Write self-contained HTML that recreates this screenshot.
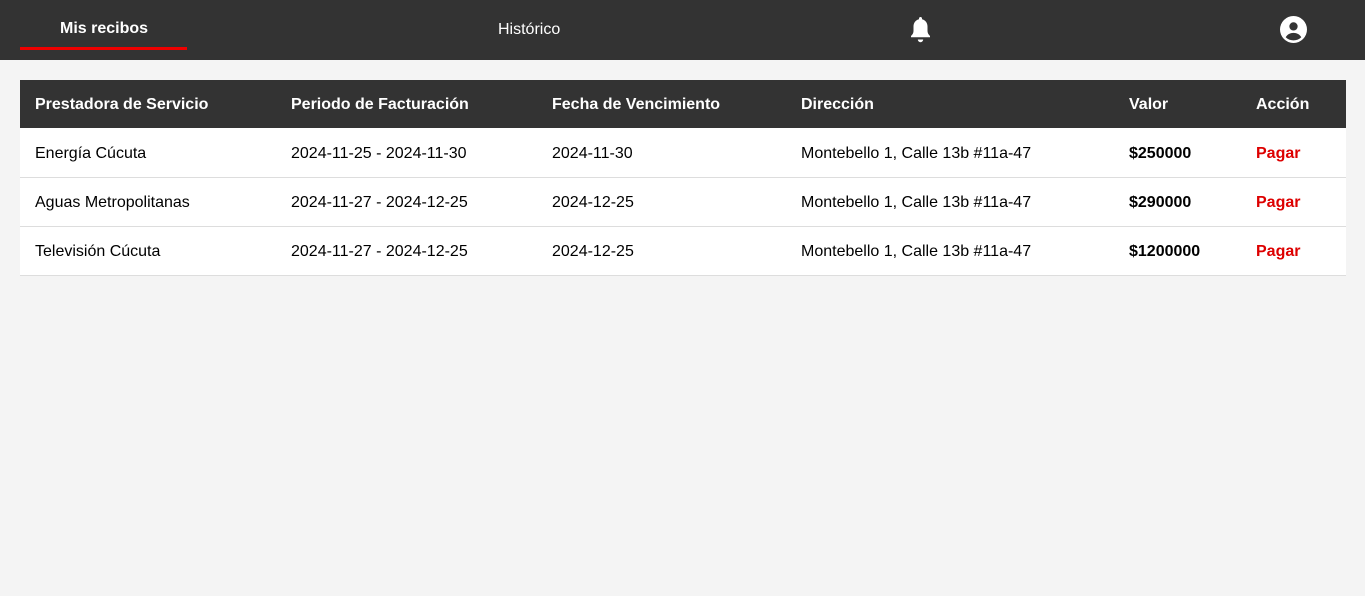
<!DOCTYPE html>
<html><head><meta charset="utf-8"><style>
body{margin:0;background:#f4f4f4;font-family:"Liberation Sans",sans-serif;width:1365px;height:596px;overflow:hidden;position:relative}
nav{position:absolute;left:0;top:0;width:1365px;height:60px;background:#333;color:#fff}
.t{position:absolute;font-size:16px}
table{position:absolute;left:20px;top:80px;width:1326px;border-collapse:collapse;background:#fff;font-size:16px}
th{background:#333;color:#fff;text-align:left;font-weight:bold;height:47px;padding:1px 0 0 15px}
td{height:47px;padding:1px 0 0 15px;border-bottom:1px solid #ddd;color:#000}
tr.f td{padding-top:2px}
.b{font-weight:bold}.r{color:#d00;font-weight:bold}
</style></head><body>
<nav>
<div class="t" style="left:60px;top:20px;font-weight:bold">Mis recibos</div>
<div style="position:absolute;left:20px;top:47px;width:167px;height:3px;background:#e00"></div>
<div class="t" style="left:498px;top:21px">Histórico</div>
<svg style="position:absolute;left:908px;top:16px" width="25" height="27" viewBox="0 0 25 27"><path d="M12.5 1c1 0 1.5.7 1.5 1.5v.7c3.5.8 5.5 3.8 5.5 7.3v4.5c0 2 1 3.5 2.5 5v1.3H3V20c1.5-1.5 2.5-3 2.5-5v-4.5c0-3.5 2-6.5 5.5-7.3v-.7C11 1.7 11.5 1 12.5 1z" fill="#fff"/><path d="M9.8 23.5h5.4a2.7 2.7 0 0 1-5.4 0z" fill="#fff"/></svg>
<svg style="position:absolute;left:1280px;top:16px" width="27" height="27" viewBox="0 0 26 26"><circle cx="13" cy="13" r="13" fill="#fff"/><circle cx="13" cy="10" r="4" fill="#333"/><path d="M5.5 20.5c1.5-3 4.5-4.3 7.5-4.3s6 1.3 7.5 4.3c-2 2-4.6 3-7.5 3s-5.5-1-7.5-3z" fill="#333"/></svg>
</nav>
<table>
<tr><th style="width:241px">Prestadora de Servicio</th><th style="width:246px">Periodo de Facturación</th><th style="width:234px">Fecha de Vencimiento</th><th style="width:313px">Dirección</th><th style="width:112px">Valor</th><th>Acción</th></tr>
<tr class="f"><td>Energía Cúcuta</td><td>2024-11-25 - 2024-11-30</td><td>2024-11-30</td><td>Montebello 1, Calle 13b #11a-47</td><td class="b">$250000</td><td class="r">Pagar</td></tr>
<tr><td>Aguas Metropolitanas</td><td>2024-11-27 - 2024-12-25</td><td>2024-12-25</td><td>Montebello 1, Calle 13b #11a-47</td><td class="b">$290000</td><td class="r">Pagar</td></tr>
<tr><td>Televisión Cúcuta</td><td>2024-11-27 - 2024-12-25</td><td>2024-12-25</td><td>Montebello 1, Calle 13b #11a-47</td><td class="b">$1200000</td><td class="r">Pagar</td></tr>
</table>
</body></html>
